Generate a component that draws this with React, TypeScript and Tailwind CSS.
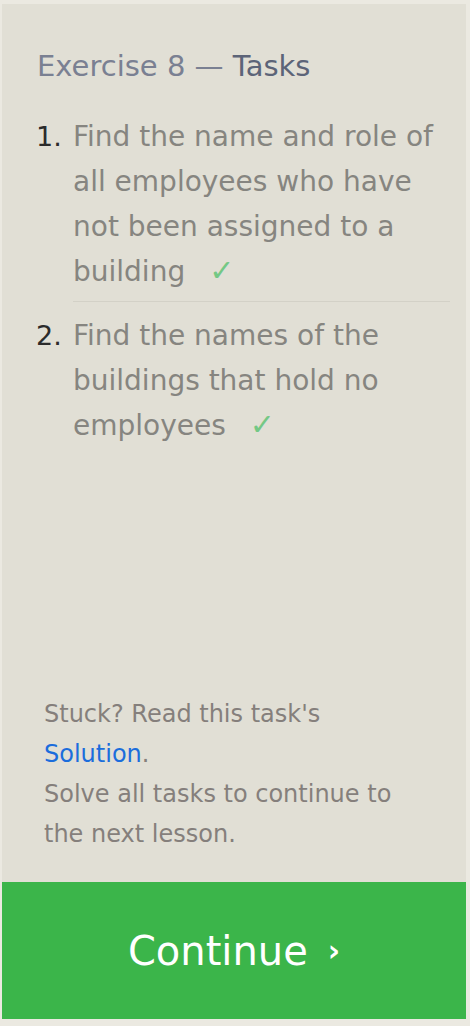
export default function App() {
  const tasks = [
    'Find the name and role of all employees who have not been assigned to a building',
    'Find the names of the buildings that hold no employees',
  ]

  return (
    <div
      className="flex h-[1026px] w-[470px] flex-col bg-[#ebe9e1] pb-[7px] pl-[2px] pr-[4px] pt-[4px]"
      style={{ fontFamily: '"DejaVu Sans", Verdana, sans-serif' }}
    >
      <div className="flex flex-1 flex-col bg-[#e1dfd5]">
        {/* Header */}
        <h1 className="pl-[35px] pt-[42px] text-[29px] leading-[40px] text-[#7a8092]">
          Exercise 8 — <span className="text-[#5c6478]">Tasks</span>
        </h1>

        {/* Task list */}
        <ol className="mt-[28px] pl-[34px] pr-[16px]">
          {tasks.map((t, i) => (
            <li key={i} className={'flex ' + (i > 0 ? 'mt-[11px]' : '')}>
              <span className="w-[37px] shrink-0 text-[27px] leading-[45px] text-[#2b2b2b]">{i + 1}.</span>
              <div
                className={
                  'flex-1 pb-[7px] text-[28px] leading-[45px] text-[#868580] ' +
                  (i === 0 ? 'border-b border-[#d3d1c7]' : '')
                }
              >
                {t}
                <span className="ml-[24px] inline-block text-[30px] leading-none text-[#74c885]">✓</span>
              </div>
            </li>
          ))}
        </ol>

        <div className="flex-1" />

        {/* Footer */}
        <div className="px-[42px] pb-[28px] text-[24px] leading-[40px] text-[#857f7c]">
          Stuck? Read this task's
          <br />
          <a className="text-[#1b6ddc]">Solution</a>.
          <br />
          Solve all tasks to continue to the next lesson.
        </div>

        <button className="flex h-[137px] w-full items-center justify-center bg-[#3bb54a] text-[40px] text-white">
          Continue
          <span className="ml-[20px] text-[30px] font-bold">›</span>
        </button>
      </div>
    </div>
  )
}
